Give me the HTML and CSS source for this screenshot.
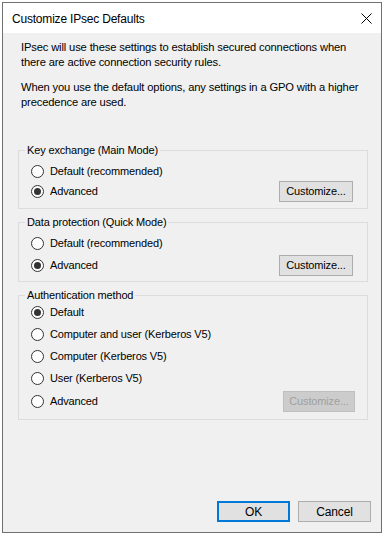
FILE: index.html
```html
<!DOCTYPE html>
<html lang="en">
<head>
  <meta charset="UTF-8" />
  <link rel="stylesheet" href="styles.css">
</head>
<body>
  <div class="window">
    <div class="titlebar">
      <span class="title">Customize IPsec Defaults</span>
      <svg class="close" width="11" height="11" viewBox="0 0 11 11">
        <path d="M0.5 0.5 L10.5 10.5 M10.5 0.5 L0.5 10.5" stroke="#000" stroke-width="1" fill="none" />
      </svg>
    </div>

    <div class="content">
      <p class="intro">IPsec will use these settings to establish secured connections when there are active connection security rules.</p>
      <p class="intro second">When you use the default options, any settings in a GPO with a higher precedence are used.</p>

      <!-- Key exchange -->
      <div class="group group-first">
        <div class="legend">Key exchange (Main Mode)</div>
        <div class="rows">
          <div class="row"><span class="radio"></span>Default (recommended)</div>
          <div class="row"><span class="radio checked"></span>Advanced<button class="btn customize">Customize...</button></div>
        </div>
      </div>

      <!-- Data protection -->
      <div class="group group-second">
        <div class="legend">Data protection (Quick Mode)</div>
        <div class="rows">
          <div class="row"><span class="radio"></span>Default (recommended)</div>
          <div class="row"><span class="radio checked"></span>Advanced<button class="btn customize">Customize...</button></div>
        </div>
      </div>

      <!-- Authentication -->
      <div class="group group-auth">
        <div class="legend">Authentication method</div>
        <div class="rows">
          <div class="row"><span class="radio checked"></span>Default</div>
          <div class="row"><span class="radio"></span>Computer and user (Kerberos V5)</div>
          <div class="row"><span class="radio"></span>Computer (Kerberos V5)</div>
          <div class="row"><span class="radio"></span>User (Kerberos V5)</div>
          <div class="row"><span class="radio"></span>Advanced<button class="btn customize disabled" disabled>Customize...</button></div>
        </div>
      </div>
    </div>

    <div class="footer">
      <button class="btn ok">OK</button>
      <button class="btn cancel">Cancel</button>
    </div>
  </div>
</body>
</html>
```

FILE: styles.css
```css
body {
  margin: 0;
  background-color: #ffffff;
  font-family: 'Liberation Sans', Arial, sans-serif;
  font-size: 11px;
  letter-spacing: -0.15px;
  color: #000000;
}

.window {
  margin: 2px;
  width: 380px;
  height: 531px;
  box-sizing: border-box;
  border: 1px solid #707070;
  background-color: #f0f0f0;
  display: flex;
  flex-direction: column;
}

.titlebar {
  height: 30px;
  background-color: #ffffff;
  display: flex;
  align-items: center;
  padding: 0 9px;
  font-size: 12px;
  letter-spacing: -0.2px;
}

.title {
  flex: 1;
  line-height: 15px;
  margin-top: 2px;
}

.close {
  margin-top: 1px;
}

.content {
  flex: 1;
  padding: 7px 13px 0 15px;
}

.intro {
  margin: 0 0 0 3px;
  max-width: 342px;
  line-height: 15px;
  font-size: 11.2px;
}

.intro.second {
  margin-top: 10px;
}

.group {
  border: 1px solid #dcdcdc;
}

.group-first {
  margin-top: 40px;
  padding: 0 14px 7px 0;
}

.group-second {
  margin-top: 13px;
  padding: 0 14px 6px 0;
}

.group-auth {
  margin-top: 13px;
  padding: 0 12px 8px 0;
}

.legend {
  width: fit-content;
  margin: -8px 0 0 6px;
  padding: 0 2px;
  line-height: 14px;
  background-color: #f0f0f0;
}

.rows {
  display: flex;
  flex-direction: column;
}

.group-first .rows {
  padding-top: 4px;
}

.group-second .rows {
  padding-top: 4px;
  gap: 2px;
}

.group-auth .rows {
  padding-top: 0;
  gap: 2.25px;
}

.row {
  height: 20px;
  display: flex;
  align-items: center;
  line-height: 15px;
}

.radio {
  width: 13px;
  height: 13px;
  box-sizing: border-box;
  border: 1px solid #333333;
  border-radius: 50%;
  background-color: #ffffff;
  margin: 0 6px 0 12px;
  display: flex;
  align-items: center;
  justify-content: center;
  flex-shrink: 0;
}

.radio.checked::after {
  content: "";
  width: 7px;
  height: 7px;
  border-radius: 50%;
  background-color: #333333;
}

.btn {
  font-family: 'Liberation Sans', Arial, sans-serif;
  font-size: 11px;
  letter-spacing: -0.15px;
  color: #000000;
  background-color: #e1e1e1;
  border: 1px solid #adadad;
  box-sizing: border-box;
  height: 21px;
  padding: 0;
  border-radius: 0;
}

.customize {
  margin-left: auto;
  width: 74px;
  flex-shrink: 0;
}

.customize.disabled {
  width: 72px;
  background-color: #cccccc;
  border-color: #bfbfbf;
  color: #a0a0a0;
}

.footer {
  display: flex;
  justify-content: flex-end;
  gap: 8px;
  padding: 0 10px 10px 0;
}

.ok {
  width: 73px;
  border: 2px solid #0078d7;
  font-size: 12px;
}

.cancel {
  width: 73px;
  font-size: 12px;
}
```
